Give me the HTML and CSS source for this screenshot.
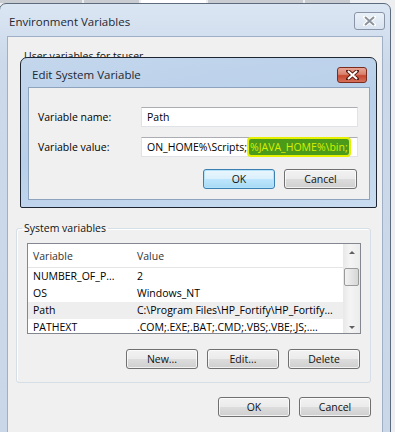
FILE: index.html
```html
<!DOCTYPE html>
<html lang="en">
<head>
<meta charset="UTF-8">
<title>Environment Variables</title>
<link rel="stylesheet" href="styles.css">
</head>
<body>
<div class="screen">
    <div class="taskstrip">
        <span class="tab" style="width:82px"></span>
        <span class="tab" style="width:55px"></span>
        <span class="tab tab-on" style="width:65px"></span>
        <span class="tab" style="width:95px"></span>
        <span class="tab" style="width:45px"></span>
    </div>

    <div class="window">
        <div class="titlebar">
            <span class="title">Environment Variables</span>
            <span class="close-btn close-off">
                <svg width="13" height="10" viewBox="0 0 13 10"><path d="M2 1 L11 9 M11 1 L2 9" stroke="#fff" stroke-width="4" stroke-linecap="round"/><path d="M2 1 L11 9 M11 1 L2 9" stroke="#8c939c" stroke-width="2"/></svg>
            </span>
        </div>
        <div class="client">
            <fieldset class="group group-user">
                <legend>User variables for tsuser</legend>
                <div class="user-list"></div>
            </fieldset>

            <fieldset class="group">
                <legend>System variables</legend>
                <div class="listbox">
                    <table class="vars">
                        <thead>
                            <tr><th>Variable</th><th>Value</th></tr>
                        </thead>
                        <tbody>
                            <tr><td>NUMBER_OF_P...</td><td>2</td></tr>
                            <tr><td>OS</td><td>Windows_NT</td></tr>
                            <tr class="row-hot"><td>Path</td><td>C:\Program Files\HP_Fortify\HP_Fortify...</td></tr>
                            <tr><td>PATHEXT</td><td>.COM;.EXE;.BAT;.CMD;.VBS;.VBE;.JS;....</td></tr>
                        </tbody>
                    </table>
                    <div class="scrollbar">
                        <span class="arrow arrow-up"></span>
                        <span class="thumb"></span>
                        <span class="track"></span>
                        <span class="arrow arrow-down"></span>
                    </div>
                </div>
                <div class="btn-row">
                    <button class="btn">New...</button>
                    <button class="btn">Edit...</button>
                    <button class="btn">Delete</button>
                </div>
            </fieldset>

            <div class="btn-row footer">
                <button class="btn">OK</button>
                <button class="btn">Cancel</button>
            </div>
        </div>
    </div>

    <div class="dialog">
        <div class="titlebar dialog-bar">
            <span class="title">Edit System Variable</span>
            <span class="close-btn close-red">
                <svg width="13" height="10" viewBox="0 0 13 10"><path d="M2 1 L11 9 M11 1 L2 9" stroke="#5a1a10" stroke-width="4" stroke-linecap="round"/><path d="M2 1 L11 9 M11 1 L2 9" stroke="#fff" stroke-width="2"/></svg>
            </span>
        </div>
        <div class="dialog-client">
            <div class="field">
                <label>Variable name:</label>
                <div class="textbox">Path</div>
            </div>
            <div class="field">
                <label>Variable value:</label>
                <div class="textbox">ON_HOME%\Scripts;<span class="marked">%JAVA_HOME%\bin;</span></div>
            </div>
            <div class="btn-row dialog-btns">
                <button class="btn btn-default">OK</button>
                <button class="btn">Cancel</button>
            </div>
        </div>
    </div>
</div>
</body>
</html>
```

FILE: styles.css
```css
body {
    margin: 0;
    font-family: "Open Sans", "Noto Sans", sans-serif;
    font-size: 10.5px;
    color: #000;
    background-color: #eceef0;
}
.screen {
    position: relative;
    width: 395px;
    height: 432px;
    overflow: hidden;
}
.taskstrip {
    display: flex;
    height: 3px;
    gap: 2px;
}
.tab {
    background-color: #c9cdd2;
}
.tab-on {
    background-color: #fff;
}

/* outer window */
.window {
    display: flex;
    flex-direction: column;
    width: 392px;
    height: 440px;
    margin-left: -1px;
    box-sizing: border-box;
    padding: 0 7px 4px 7px;
    border: 1px solid #5d6b7c;
    border-radius: 7px 7px 0 0;
    background: linear-gradient(#dbe6f3, #cbd9ea 60px, #c9d7e9);
}
.titlebar {
    display: flex;
    justify-content: space-between;
    align-items: flex-start;
    height: 32px;
}
.title {
    margin-top: 11px;
    padding-left: 2px;
    line-height: 14px;
    font-size: 11.5px;
    color: #1e2733;
}
.close-btn {
    display: flex;
    align-items: center;
    justify-content: center;
    box-sizing: border-box;
    border-radius: 3px;
}
.close-off {
    width: 31px;
    height: 18px;
    margin-top: 8px;
    margin-right: -2px;
    border: 1px solid #8995a6;
    background: linear-gradient(rgba(255,255,255,.45), rgba(255,255,255,.1));
}
.client {
    flex: 1;
    border: 1px solid #9fb0c6;
    background-color: #f0f0f0;
}

/* group boxes */
.group {
    margin: 0 11px 0 8px;
    padding: 8px 9px 13px 10px;
    min-inline-size: 0;
    border: 1px solid #d5dfe5;
    box-shadow: inset 1px 1px #fff;
    border-radius: 3px;
}
.group legend {
    margin-left: -5px;
    padding: 0 2px;
    line-height: 14px;
    color: #111;
}
.group-user {
    margin-top: 12px;
    padding-bottom: 0;
    border-color: transparent;
    box-shadow: none;
}
.user-list {
    height: 134px;
}
.group-user + .group {
    margin-top: 15px;
}

/* list view */
.listbox {
    display: grid;
    grid-template-columns: 1fr 17px;
    height: 91px;
    box-sizing: border-box;
    border: 1px solid #828790;
    background-color: #fff;
    overflow: hidden;
}
.vars {
    border-collapse: collapse;
    width: 100%;
    table-layout: fixed;
}
.vars th, .vars td {
    padding: 0 0 0 5px;
    text-align: left;
    font-weight: normal;
    white-space: nowrap;
    overflow: hidden;
}
.vars th:first-child, .vars td:first-child {
    width: 99px;
}
.vars th {
    height: 23px;
    border-bottom: 1px solid #e5e5e5;
    color: #333;
}
.vars td {
    height: 17px;
    line-height: 17px;
}
.row-hot td {
    background-color: #eeeeee;
}
.scrollbar {
    display: flex;
    flex-direction: column;
    background: linear-gradient(90deg, #e8e8e8, #f4f4f4 40%, #ececec);
}
.arrow {
    display: flex;
    justify-content: center;
    align-items: center;
    height: 17px;
}
.arrow::before {
    content: "";
    border-left: 3px solid transparent;
    border-right: 3px solid transparent;
}
.arrow-up::before {
    border-bottom: 3px solid #606060;
}
.arrow-down::before {
    border-top: 3px solid #606060;
}
.thumb {
    height: 16px;
    margin: 7px 1px 0 1px;
    border: 1px solid #9a9a9a;
    border-radius: 2px;
    background: linear-gradient(90deg, #f2f2f2, #e4e4e4 50%, #d6d6d6);
}
.track {
    flex: 1;
}

/* buttons */
.btn-row {
    display: flex;
    justify-content: flex-end;
    gap: 9px;
    margin-top: 15px;
    padding-right: 1px;
}
.btn {
    width: 72px;
    height: 20px;
    padding: 0;
    font-family: inherit;
    font-size: 10.5px;
    color: #111;
    border: 1px solid #707070;
    border-radius: 3px;
    background: linear-gradient(#f2f2f2, #ebebeb 50%, #dddddd 50%, #cfcfcf);
    box-shadow: inset 0 0 0 1px rgba(255,255,255,.7);
}
.footer {
    margin-top: 14px;
    padding-right: 11px;
}

/* modal dialog */
.dialog {
    position: absolute;
    left: 20px;
    top: 57px;
    width: 357px;
    height: 151px;
    box-sizing: border-box;
    display: flex;
    flex-direction: column;
    padding: 0 6px 7px 7px;
    border: 1px solid #1d2630;
    border-radius: 7px 7px 2px 2px;
    background: linear-gradient(170deg, #c3d6ec, #b9d0ea 50%, #c9dcf0);
}
.dialog-bar {
    height: 29px;
}
.dialog-bar .title {
    margin-top: 10px;
    padding-left: 4px;
}
.close-red {
    width: 30px;
    height: 16px;
    margin-top: 9px;
    margin-right: 3px;
    border: 1px solid #7a2c1f;
    background: linear-gradient(#e8a595, #d9826f 45%, #c7462f 55%, #d6705a);
}
.dialog-client {
    flex: 1;
    padding: 19px 11px 10px 9px;
    border: 1px solid #8ea3bd;
    background-color: #f0f0f0;
}
.field {
    display: flex;
    align-items: center;
    margin-bottom: 10px;
}
.field label {
    width: 103px;
}
.textbox {
    flex: 1;
    height: 20px;
    box-sizing: border-box;
    padding-left: 5px;
    line-height: 18px;
    white-space: nowrap;
    border: 1px solid #dfe3e8;
    border-top-color: #abadb3;
    background-color: #fff;
}
.marked {
    margin-left: 2px;
    padding: 1px 1px 1px 1px;
    color: #d9f000;
    background-color: #4b9a1a;
    box-shadow: 0 0 0 2px #e4f000;
    border-radius: 2px;
}
.dialog-btns {
    margin-top: 12px;
}
.dialog-btns .btn:last-child {
    width: 73px;
}
.btn-default {
    border-color: #3c7fb1;
    background: linear-gradient(#eaf6fd, #d9f0fc 50%, #bee6fd 50%, #a7d9f5);
    box-shadow: inset 0 0 0 1px #b4e3f9;
}
```
